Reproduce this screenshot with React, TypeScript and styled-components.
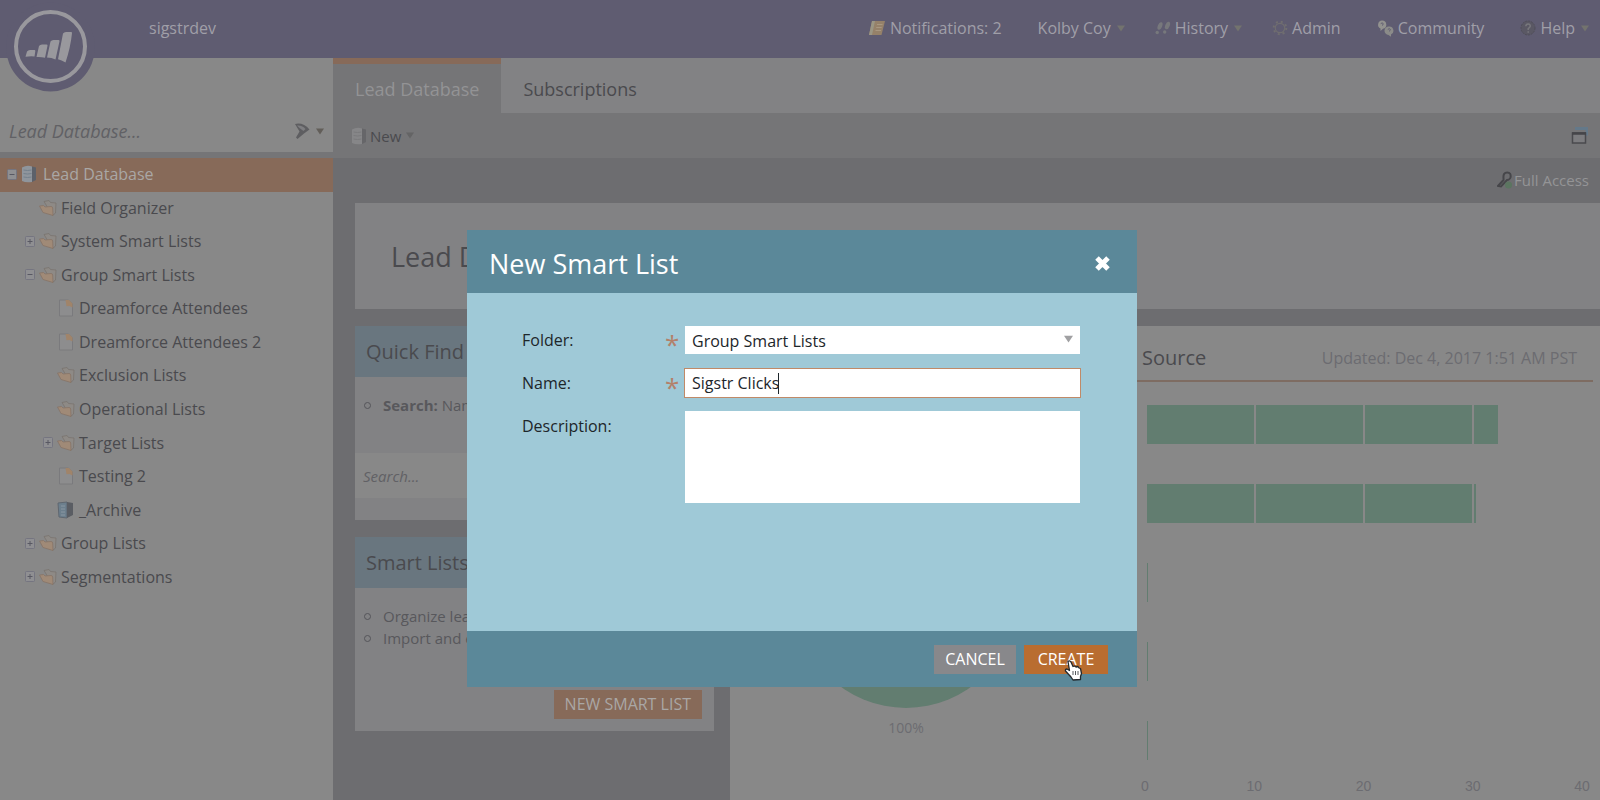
import React from 'react';
import styled, { createGlobalStyle } from 'styled-components';

const color = {
  header: '#5f5c71',
  headerText: '#a09fa8',
  side: '#888888',
  toolbar: '#757577',
  canvas: '#6d6d70',
  card: '#828284',
  cardHead: '#69767f',
  orange: '#876a59',
  text: '#4a4a4e',
  muted: '#6c6c71',
  green: '#627d70',
  dialogBar: '#5b8899',
  dialogBody: '#9fc9d7',
};

const GlobalStyle = createGlobalStyle`
  *, *::before, *::after { box-sizing: border-box; }
  body { margin: 0; background: ${color.canvas}; font-family: 'Open Sans', 'Noto Sans', sans-serif; }
  button, input, select, textarea { font: inherit; color: inherit; border: 0; border-radius: 0; background: none; padding: 0; margin: 0; outline: none; }
  ul { list-style: none; margin: 0; padding: 0; }
  h1, h2, h3, p { margin: 0; font-weight: 400; }
  a { color: inherit; text-decoration: none; }
  svg { display: block; flex: none; }
`;

const Page = styled.div`
  display: flex;
  flex-direction: column;
  height: 100vh;
  overflow: hidden;
  color: ${color.text};
`;

const Header = styled.header`
  position: relative;
  display: flex;
  align-items: center;
  justify-content: space-between;
  flex: none;
  height: 58px;
  padding: 0 11px 2px 149px;
  background: ${color.header};
  color: ${color.headerText};
  font-size: 16px;
`;

const Logo = styled.a`
  position: absolute;
  left: 5px;
  top: 2px;
`;

const Nav = styled.nav`
  display: flex;
  gap: 30px;
`;

const NavItem = styled.button<{ $menu?: boolean }>`
  display: flex;
  align-items: center;
  gap: 4px;
  padding-right: ${p => (p.$menu ? 0 : 6)}px;
  cursor: pointer;
`;

const MenuCaret = styled.span`
  display: flex;
  padding-left: 2px;
`;

const Body = styled.div`
  display: flex;
  flex: 1;
  min-height: 0;
`;

const Sidebar = styled.aside`
  display: flex;
  flex-direction: column;
  flex: none;
  width: 333px;
  background: ${color.side};
`;

const TreeSearch = styled.form`
  display: flex;
  align-items: flex-end;
  height: 100px;
  padding: 0 9px 9px;
  gap: 5px;
  border-bottom: 6px solid ${color.toolbar};
`;

const TreeSearchInput = styled.input`
  flex: 1;
  min-width: 0;
  height: 24px;
  font-size: 18px;
  font-style: italic;
  line-height: 24px;
  &::placeholder { color: #616165; opacity: 1; }
`;

const FilterButton = styled.button`
  display: flex;
  align-items: center;
  gap: 5px;
  height: 24px;
`;

const Tree = styled.ul`
  display: grid;
  grid-auto-rows: 1fr;
  height: 436px;
`;

const TreeItem = styled.li<{ $selected?: boolean }>`
  display: flex;
  background: ${p => (p.$selected ? color.orange : 'transparent')};
  color: ${p => (p.$selected ? '#aaa7a5' : color.text)};
`;

const TreeRow = styled.button<{ $level: number }>`
  display: grid;
  grid-template-columns: 10px 18px 1fr;
  align-items: center;
  flex: 1;
  column-gap: 4px;
  padding-left: ${p => 7 + p.$level * 18}px;
  padding-bottom: 1px;
  font-size: 16px;
  line-height: 24px;
  text-align: left;
  white-space: nowrap;
`;

const Main = styled.main`
  display: flex;
  flex-direction: column;
  flex: 1;
  min-width: 0;
`;

const Tabs = styled.div`
  display: flex;
  flex: none;
  height: 55px;
  background: ${color.card};
`;

const Tab = styled.button<{ $active?: boolean }>`
  padding: ${p => (p.$active ? 1 : 7)}px 22px 0;
  border-top: ${p => (p.$active ? `6px solid ${color.orange}` : '0')};
  background: ${p => (p.$active ? color.toolbar : 'transparent')};
  color: ${p => (p.$active ? '#939395' : color.text)};
  font-size: 18px;
`;

const Toolbar = styled.div`
  display: flex;
  align-items: center;
  justify-content: space-between;
  flex: none;
  height: 45px;
  padding: 0 12px 0 18px;
  background: ${color.toolbar};
`;

const NewButton = styled.button`
  display: flex;
  align-items: center;
  gap: 3px;
  font-size: 15px;
`;

const Access = styled.div`
  display: flex;
  align-items: center;
  justify-content: flex-end;
  flex: none;
  height: 45px;
  padding: 0 11px 1px 0;
  gap: 1px;
  color: #949496;
  font-size: 15px;
`;

const TitleCard = styled.section`
  display: flex;
  align-items: center;
  flex: none;
  height: 106px;
  margin-left: 22px;
  padding-left: 36px;
  background: ${color.card};
`;

const PageTitle = styled.h1`
  font-size: 27px;
`;

const Columns = styled.div`
  display: grid;
  grid-template-columns: 359px 1fr;
  flex: 1;
  gap: 16px;
  min-height: 0;
  padding: 17px 0 0 22px;
`;

const CardStack = styled.div`
  display: flex;
  flex-direction: column;
  gap: 17px;
`;

const Card = styled.section`
  display: flex;
  flex-direction: column;
  height: 194px;
  background: ${color.card};
`;

const CardTitle = styled.h2`
  flex: none;
  height: 51px;
  padding-left: 11px;
  background: ${color.cardHead};
  font-size: 20px;
  line-height: 51px;
`;

const Bullets = styled.ul`
  flex: 1;
  padding: 17px 9px 0;
`;

const Bullet = styled.li`
  display: flex;
  align-items: center;
  gap: 12px;
  height: 22px;
  color: #58585c;
  font-size: 15px;
  &::before {
    content: '';
    width: 7px;
    height: 7px;
    border: 1px solid #55555a;
    border-radius: 50%;
  }
`;

const QuickSearch = styled.input`
  height: 45px;
  margin-bottom: 22px;
  padding: 0 8px;
  background: ${color.side};
  font-size: 15px;
  font-style: italic;
  &::placeholder { color: #616165; opacity: 1; }
`;

const CardActions = styled.div`
  display: flex;
  justify-content: flex-end;
  padding: 0 12px 12px;
`;

const CardButton = styled.button`
  height: 29px;
  padding: 0 11px 1px;
  background: ${color.orange};
  color: #aaa7a5;
  font-size: 16px;
`;

const Charts = styled.section`
  display: grid;
  grid-template-columns: 400px 1fr;
  background: ${color.side};
`;

const PieFigure = styled.figure`
  display: flex;
  flex-direction: column;
  align-items: center;
  width: 352px;
  margin: 0;
  padding-top: 160px;
  gap: 10px;
  color: ${color.muted};
  font-size: 14px;
`;

const SourcePanel = styled.div`
  display: flex;
  flex-direction: column;
  padding-right: 7px;
`;

const ChartHeader = styled.div`
  display: flex;
  align-items: center;
  justify-content: space-between;
  height: 56px;
  padding: 9px 16px 0 12px;
  border-bottom: 2px solid #7e6c62;
  font-size: 16px;
  color: ${color.muted};
`;

const ChartTitle = styled.h2`
  color: ${color.text};
  font-size: 20px;
`;

const Plot = styled.div`
  position: relative;
  display: flex;
  flex-direction: column;
  gap: 40px;
  margin: 23px 10px 0 17px;
`;

const Bar = styled.div`
  height: 39px;
  min-width: 1px;
  background: ${color.green};
`;

const GridLine = styled.span`
  position: absolute;
  top: 0;
  bottom: 0;
  width: 2px;
  margin-left: -2px;
  background: ${color.side};
`;

const Axis = styled.div`
  display: flex;
  justify-content: space-between;
  margin: 18px -9px 0 -5px;
  color: ${color.muted};
  font-family: 'Liberation Sans', sans-serif;
  font-size: 14px;
  line-height: 16px;
  span { width: 40px; text-align: center; }
`;

const Overlay = styled.div`
  position: fixed;
  inset: 0;
  display: flex;
  justify-content: center;
  align-items: flex-start;
  padding: 230px 0 0 4px;
`;

const Dialog = styled.form`
  width: 670px;
  background: ${color.dialogBody};
  color: #1d262a;
`;

const DialogHeader = styled.div`
  display: flex;
  align-items: center;
  justify-content: space-between;
  height: 63px;
  padding: 3px 26px 0 22px;
  background: ${color.dialogBar};
  color: #fff;
`;

const DialogTitle = styled.h2`
  font-size: 27px;
`;

const Fields = styled.div`
  display: flex;
  flex-direction: column;
  gap: 13px;
  height: 338px;
  padding: 32px 57px 0 55px;
`;

const Field = styled.div`
  position: relative;
  display: grid;
  grid-template-columns: 143px 20px 1fr;
  font-size: 16px;
  line-height: 30px;
`;

const Required = styled.span`
  height: 30px;
  padding-top: 4px;
  color: #b3806a;
  font-size: 26px;
  line-height: 30px;
`;

const boxed = `
  width: 100%;
  height: 28px;
  padding: 0 7px;
  background: #fff;
`;

const Select = styled.select`
  ${boxed}
  appearance: none;
  margin: 1px 0;
`;

const SelectArrow = styled.span`
  position: absolute;
  right: 7px;
  top: 10px;
  pointer-events: none;
`;

const TextInput = styled.input`
  ${boxed}
  height: 28px;
  margin: 1px 0;
  outline: 1px solid #c08a68;
  caret-color: transparent;
`;

const Caret = styled.span`
  position: absolute;
  left: 256px;
  top: 5px;
  width: 1px;
  height: 21px;
  background: #1d262a;
`;

const TextArea = styled.textarea`
  ${boxed}
  height: 92px;
  resize: none;
`;

const DialogFooter = styled.div`
  display: flex;
  align-items: center;
  justify-content: flex-end;
  gap: 8px;
  height: 56px;
  padding: 0 29px;
  background: ${color.dialogBar};
`;

const DialogButton = styled.button<{ $primary?: boolean }>`
  position: relative;
  width: ${p => (p.$primary ? 84 : 82)}px;
  height: 29px;
  background: ${p => (p.$primary ? '#b96d30' : '#88888b')};
  color: #fff;
  font-size: 16px;
`;

const Pointer = styled.svg`
  position: absolute;
  left: 39px;
  top: 14px;
`;

const Triangle = ({ fill, size = 8 }: { fill: string; size?: number }) => (
  <svg width={size} height={size - 1} viewBox="0 0 8 7" aria-hidden="true">
    <path d="M0 0.5h8L4 6.5z" fill={fill} />
  </svg>
);

const LogoMark = () => (
  <svg width="91" height="91" viewBox="0 0 91 91" aria-hidden="true">
    <circle cx="45.5" cy="45" r="44.5" fill={color.header} />
    <circle cx="45.5" cy="44.5" r="34.5" fill="none" stroke="#99989d" strokeWidth="4" />
    <g fill="#99989d">
      <path d="M22 49.500q1-1.500 3-1.500h4.500q1 0 .8 1.200l-.8 5.300q-4-.5-9 .3z" />
      <path d="M34 44q1-1.500 3-1.500h4.500q1.200 0 1 1.200l-2.500 12q-4-1-8.500-.7z" />
      <path d="M45.500 39.500q1-1.500 3-1.500h5q1.200 0 1 1.200l-4 18.300q-4-1.800-8.500-2z" />
      <path d="M58 31.500q1-1.500 3-1.500h5q1.200 0 1 1.200-1.500 14.300-6.500 29.300-4-2.500-7.500-3.300z" />
    </g>
  </svg>
);

const NoteIcon = () => (
  <svg width="18" height="16" viewBox="0 0 18 16" aria-hidden="true">
    <path d="M4 1h13l-3.500 14H1z" fill="#958169" />
    <path d="M4 1h3L4 15H1z" fill="#9a9684" />
    <path d="M9 4.500h5.500M8.200 7.500h5.500M7.500 10.500H13" stroke="#a89780" />
  </svg>
);

const FeetIcon = () => (
  <svg width="16" height="14" viewBox="0 0 16 14" aria-hidden="true" fill="#77787c">
    <ellipse cx="5" cy="5" rx="2.200" ry="4" transform="rotate(22 5 5)" />
    <circle cx="2.200" cy="11.500" r="1.700" />
    <ellipse cx="12.500" cy="4.500" rx="2.200" ry="4" transform="rotate(22 12.500 4.500)" />
    <circle cx="9.700" cy="11" r="1.700" />
  </svg>
);

const GearIcon = () => (
  <svg width="16" height="16" viewBox="0 0 16 16" aria-hidden="true" fill="none" stroke="#706e70">
    <circle cx="8" cy="8" r="6.300" strokeWidth="2" strokeDasharray="2 2.950" />
    <circle cx="8" cy="8" r="4.700" strokeWidth="1.200" />
  </svg>
);

const CommunityIcon = () => (
  <svg width="17" height="17" viewBox="0 0 17 17" aria-hidden="true">
    <path d="M5 0.500a4.200 4.200 0 0 1 1 8.300L3.500 11V8.500A4.200 4.200 0 0 1 5 .5z" fill="#92928f" />
    <path d="M12 6.500a4.200 4.200 0 0 1 2 8v2.200L11.500 15A4.200 4.200 0 0 1 12 6.500z" fill="#8b8b89" />
    <path d="M3.700 3.700q1.500-1.700 2.600 0 0 1-1.300 1.800M10.800 9.500q1.500-1.700 2.600 0 0 1-1.300 1.800" fill="none" stroke={color.header} />
  </svg>
);

const HelpIcon = () => (
  <svg width="16" height="16" viewBox="0 0 16 16" aria-hidden="true" fill="none" stroke="#504e5a">
    <circle cx="8" cy="8" r="7" fill="#5a5864" strokeDasharray="2 1" />
    <path d="M5.800 6.300q.2-2.300 2.400-2.200 2.300.2 2 2.200-.2 1-2 2.400v1.300M8.200 11.200v1.500" stroke="#77777c" strokeWidth="1.500" />
  </svg>
);

const DatabaseIcon = ({ dim }: { dim?: boolean }) => (
  <svg width="16" height="18" viewBox="0 0 16 18" aria-hidden="true">
    <path d="M1 2.500Q6-.5 11 1.500V17Q5 18 1 16z" fill={dim ? '#868688' : '#8f959c'} />
    <path d="M11 1.500l4 1V15l-4 2z" fill={dim ? '#666669' : '#5c616a'} />
    <path d="M2.500 5q4 1 8 0M2.500 8.500q4 1 8 0M2.500 12q4 1 8 0" fill="none" stroke={dim ? '#7a7a7c' : '#74808b'} />
  </svg>
);

const FolderIcon = () => (
  <svg width="18" height="16" viewBox="0 0 18 16" aria-hidden="true">
    <path d="M5 1.500l5-1 1.500 2 5.500.5-.5 10-3 2.500z" fill="#8e8a86" stroke="#7a746f" strokeWidth="0.800" />
    <path d="M.5 6l4-.5 1.500 1.500 6-.5q1.500 0 1.700 1.500l.3 7.500L4 12.500z" fill="#a08a77" stroke="#867467" strokeWidth="0.800" />
  </svg>
);

const PageIcon = () => (
  <svg width="18" height="18" viewBox="0 0 18 18" aria-hidden="true">
    <path d="M2.500 1h9l4 4v12h-13z" fill="#8d8d8e" stroke="#7a7a7d" />
    <path d="M8.500 1h3.500l3.500 3.500v4l-3-1.500-3 .3z" fill="#a0846a" />
  </svg>
);

const ArchiveIcon = () => (
  <svg width="18" height="18" viewBox="0 0 18 18" aria-hidden="true">
    <path d="M1 2l9-1v16l-8-1z" fill="#6c7f8d" stroke="#5f6770" />
    <path d="M10 1l6 1v12l-6 3z" fill="#5a5d63" />
    <path d="M4 5h4M4 8h4M4 11h4M4 14h4" stroke="#8997a1" />
  </svg>
);

const Toggle = ({ open }: { open: boolean }) => (
  <svg width="10" height="11" viewBox="0 0 10 11" aria-hidden="true">
    <rect x="0.500" y="0.500" width="9" height="10" rx="1" fill="#8f8f92" stroke="#757580" />
    <path d={open ? 'M2.500 5.500h5' : 'M2.500 5.500h5M5 3v5'} stroke="#585863" />
  </svg>
);

const FunnelIcon = () => (
  <svg width="17" height="18" viewBox="0 0 17 18" aria-hidden="true">
    <path d="M1 2Q9 0 15.500 7.500L10 11.500 3.500 17 2 15.500 5.500 9.500z" fill="#5e5e61" />
    <path d="M3 3.500q5.500-.5 8.500 3.500l-2 2Q5.500 6.500 3 3.500z" fill="#7e7e81" />
  </svg>
);

const WindowIcon = () => (
  <svg width="17" height="17" viewBox="0 0 17 17" aria-hidden="true" fill="none">
    <path d="M4 1.500h12v7" stroke="#64798a" strokeWidth="3" />
    <rect x="1.500" y="6" width="13" height="10" fill="#7c7c7f" stroke="#4a4a4e" strokeWidth="1.500" />
    <path d="M1 6.500h14" stroke="#454549" strokeWidth="2.500" />
  </svg>
);

const KeyIcon = () => (
  <svg width="16" height="18" viewBox="0 0 16 18" aria-hidden="true" fill="none">
    <path d="M6.500 7q-.5-5.500 3.700-5.500T13.500 6.500q-1 2.500-3.500 2.500L4 15.500l-3-.5L6.500 9z" stroke="#46464a" strokeWidth="2" />
    <circle cx="11.500" cy="14" r="3.500" fill="#5b7560" />
  </svg>
);

const icons = {
  database: DatabaseIcon,
  folder: FolderIcon,
  page: PageIcon,
  archive: ArchiveIcon,
};

type Node = { label: string; level: number; icon: keyof typeof icons; open?: boolean };

const tree: Node[] = [
  { label: 'Lead Database', level: 0, icon: 'database', open: true },
  { label: 'Field Organizer', level: 1, icon: 'folder' },
  { label: 'System Smart Lists', level: 1, icon: 'folder', open: false },
  { label: 'Group Smart Lists', level: 1, icon: 'folder', open: true },
  { label: 'Dreamforce Attendees', level: 2, icon: 'page' },
  { label: 'Dreamforce Attendees 2', level: 2, icon: 'page' },
  { label: 'Exclusion Lists', level: 2, icon: 'folder' },
  { label: 'Operational Lists', level: 2, icon: 'folder' },
  { label: 'Target Lists', level: 2, icon: 'folder', open: false },
  { label: 'Testing 2', level: 2, icon: 'page' },
  { label: '_Archive', level: 2, icon: 'archive' },
  { label: 'Group Lists', level: 1, icon: 'folder', open: false },
  { label: 'Segmentations', level: 1, icon: 'folder', open: false },
];

const nav = [
  { label: 'Notifications: 2', icon: <NoteIcon /> },
  { label: 'Kolby Coy', menu: true },
  { label: 'History', icon: <FeetIcon />, menu: true },
  { label: 'Admin', icon: <GearIcon /> },
  { label: 'Community', icon: <CommunityIcon /> },
  { label: 'Help', icon: <HelpIcon />, menu: true },
];

const axisMax = 40;
const sources = [32.2, 30.2, 0.1, 0.1, 0.1];

export default function App() {
  return (
    <Page>
      <GlobalStyle />
      <Header>
        <Logo href="#" aria-label="Home"><LogoMark /></Logo>
        <span>sigstrdev</span>
        <Nav>
          {nav.map(item => (
            <NavItem key={item.label} $menu={item.menu}>
              {item.icon}
              {item.label}
              {item.menu && <MenuCaret><Triangle fill="#73736e" /></MenuCaret>}
            </NavItem>
          ))}
        </Nav>
      </Header>

      <Body>
        <Sidebar>
          <TreeSearch>
            <TreeSearchInput placeholder="Lead Database..." aria-label="Search the tree" />
            <FilterButton type="button" aria-label="Filter">
              <FunnelIcon />
              <Triangle fill="#625e59" />
            </FilterButton>
          </TreeSearch>
          <Tree>
            {tree.map(node => {
              const Icon = icons[node.icon];
              return (
                <TreeItem key={node.label} $selected={node.level === 0}>
                  <TreeRow $level={node.level}>
                    {node.open === undefined ? <span /> : <Toggle open={node.open} />}
                    <Icon />
                    {node.label}
                  </TreeRow>
                </TreeItem>
              );
            })}
          </Tree>
        </Sidebar>

        <Main>
          <Tabs>
            <Tab $active>Lead Database</Tab>
            <Tab>Subscriptions</Tab>
          </Tabs>
          <Toolbar>
            <NewButton>
              <DatabaseIcon dim />
              New
              <MenuCaret><Triangle fill="#646465" /></MenuCaret>
            </NewButton>
            <button aria-label="Open in window"><WindowIcon /></button>
          </Toolbar>
          <Access><KeyIcon />Full Access</Access>
          <TitleCard><PageTitle>Lead Database</PageTitle></TitleCard>

          <Columns>
            <CardStack>
              <Card>
                <CardTitle>Quick Find</CardTitle>
                <Bullets>
                  <Bullet><span><b>Search:</b> Name</span></Bullet>
                </Bullets>
                <QuickSearch placeholder="Search..." aria-label="Quick find" />
              </Card>
              <Card>
                <CardTitle>Smart Lists</CardTitle>
                <Bullets>
                  <Bullet>Organize leads</Bullet>
                  <Bullet>Import and export</Bullet>
                </Bullets>
                <CardActions><CardButton>NEW SMART LIST</CardButton></CardActions>
              </Card>
            </CardStack>

            <Charts>
              <PieFigure>
                <svg width="222" height="222" viewBox="0 0 222 222" aria-hidden="true">
                  <circle cx="111" cy="111" r="111" fill={color.green} />
                </svg>
                <figcaption>100%</figcaption>
              </PieFigure>
              <SourcePanel>
                <ChartHeader>
                  <ChartTitle>Source</ChartTitle>
                  <span>Updated: Dec 4, 2017 1:51 AM PST</span>
                </ChartHeader>
                <Plot>
                  {sources.map((value, i) => (
                    <Bar key={i} style={{ width: `${(value / axisMax) * 100}%` }} />
                  ))}
                  {[10, 20, 30].map(tick => (
                    <GridLine key={tick} style={{ left: `${(tick / axisMax) * 100}%` }} />
                  ))}
                </Plot>
                <Axis>
                  {[0, 10, 20, 30, 40].map(tick => <span key={tick}>{tick}</span>)}
                </Axis>
              </SourcePanel>
            </Charts>
          </Columns>
        </Main>
      </Body>

      <Overlay>
        <Dialog role="dialog" aria-labelledby="dialog-title">
          <DialogHeader>
            <DialogTitle id="dialog-title">New Smart List</DialogTitle>
            <button type="button" aria-label="Close">
              <svg width="17" height="17" viewBox="0 0 17 17" aria-hidden="true">
                <path d="M3 3l11 11M14 3L3 14" stroke="#fff" strokeWidth="5" />
              </svg>
            </button>
          </DialogHeader>
          <Fields>
            <Field>
              <label htmlFor="folder">Folder:</label>
              <Required>*</Required>
              <Select id="folder" defaultValue="group">
                <option value="group">Group Smart Lists</option>
              </Select>
              <SelectArrow><Triangle fill="#a0a0a2" size={9} /></SelectArrow>
            </Field>
            <Field>
              <label htmlFor="name">Name:</label>
              <Required>*</Required>
              <TextInput id="name" defaultValue="Sigstr Clicks" />
              <Caret />
            </Field>
            <Field>
              <label htmlFor="description">Description:</label>
              <span />
              <TextArea id="description" />
            </Field>
          </Fields>
          <DialogFooter>
            <DialogButton type="button">CANCEL</DialogButton>
            <DialogButton type="button" $primary>
              CREATE
              <Pointer width="20" height="22" viewBox="0 0 20 22" aria-hidden="true">
                <path
                  d="M5 2.500Q6.500 1 8 3l2 4.500 1.500-.5 1.500 1 2-.5 1 1.500 1.500.5 1 5-1 3v3l-7.500.5-2-3L2.500 12q-.5-2 1.500-2l2.500 1.500z"
                  fill="#fff" stroke="#23282c" strokeWidth="1.300" strokeLinejoin="round"
                />
                <path d="M10 12v4M12.500 12v4M15 12v4" stroke="#55595d" />
              </Pointer>
            </DialogButton>
          </DialogFooter>
        </Dialog>
      </Overlay>
    </Page>
  );
}
